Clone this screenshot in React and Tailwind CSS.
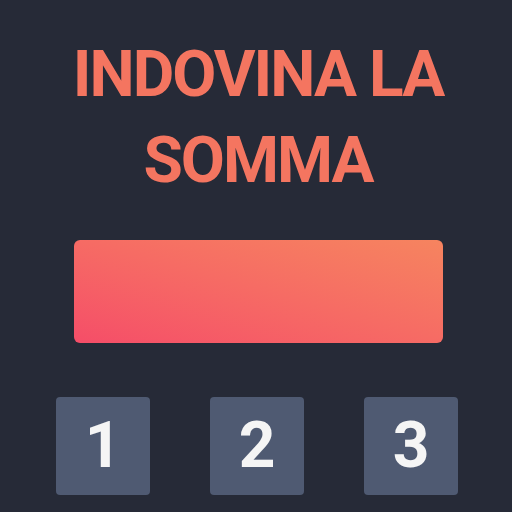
export default function App() {
  return (
    <div className="w-[512px] h-[512px] bg-[#262a37] flex flex-col items-center" style={{ fontFamily: 'Roboto, "Noto Sans", sans-serif' }}>
      <h1 className="mt-[32px] ml-[4px] w-[420px] text-center text-[64px] leading-[86px] font-bold text-[#f47560] tracking-[-2px]">
        INDOVINA LA SOMMA
      </h1>
      <div className="mt-[36px] ml-[5px] w-[369px] h-[103px] rounded-[6px] bg-gradient-to-tr from-[#f54d68] to-[#f6845f]" />
      <div className="mt-[54px] ml-[2px] flex gap-[60px]">
        {["1", "2", "3"].map((n) => (
          <div key={n} className="w-[94px] h-[98px] rounded-[4px] bg-[#4f5a72] flex items-center justify-center text-[64px] font-bold text-[#f5f5f5]">
            {n}
          </div>
        ))}
      </div>
    </div>
  );
}
